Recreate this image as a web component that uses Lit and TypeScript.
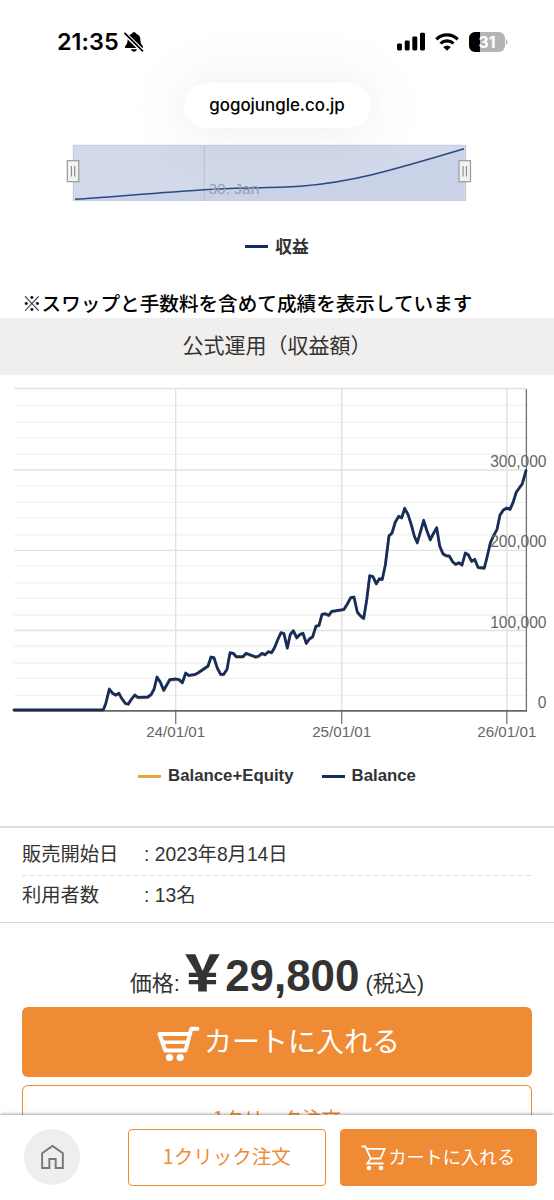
import { LitElement, html, svg, css } from "lit";
import { customElement } from "lit/decorators.js";

const SERIES: [number, number][] = [
  [14, 710], [103.3, 710], [106, 702.7], [109.3, 689], [112.7, 693.3], [115.7, 695], [119, 693.3], [121.7, 698.3],
  [125.3, 703.3], [128.3, 704], [131.3, 699.3], [134.7, 695], [138, 697.3], [147.7, 697], [151, 694.7], [154, 689.3],
  [157, 677], [160.3, 682], [163.7, 690.3], [169.7, 679.7], [176, 679], [179.3, 679.7], [182.3, 682.7], [185.7, 673],
  [188.7, 675.3], [195.3, 674.3], [198.3, 672.7], [208, 666], [211, 657], [214, 657.7], [217.3, 668], [220.7, 674.3],
  [223.7, 674.3], [227, 669.3], [230, 652.7], [233.3, 653.3], [236.3, 656.7], [243, 656.7], [246, 653.3], [255.7, 657],
  [258.7, 656], [262, 653.3], [265, 654.7], [268.3, 651.7], [271.7, 652.5], [274.7, 647.3], [278, 639], [281, 632.7],
  [284, 633.7], [287.3, 648], [290.3, 634.3], [293.3, 630.7], [296.7, 637.7], [300, 634.3], [303, 633.3], [306.3, 643.3],
  [309.3, 639], [312.7, 636.7], [316, 626], [319, 625.3], [322, 614.3], [325.3, 613.7], [328.7, 615.3], [331.7, 611.3],
  [338, 610.3], [344, 609.3], [347.3, 604], [350.7, 597.7], [354, 597], [357.3, 612], [360.3, 615.7], [363.7, 618.3],
  [366.7, 600], [369.7, 575.7], [373, 576.7], [376.3, 583.7], [379.3, 578.7], [382.3, 579.3], [385.3, 565], [389, 535.7],
  [392, 533], [395.3, 522], [398.7, 516.3], [401.7, 517.7], [404.7, 508.3], [408, 514.3], [411.3, 524.7], [414.3, 536],
  [417.3, 542.7], [423.7, 520.3], [427, 531], [430.3, 539.7], [433.3, 533.7], [436.7, 527.7], [439.7, 546], [443, 553.7],
  [446.3, 555.7], [449.3, 556], [452.7, 561.7], [455.7, 564.3], [459, 562.7], [462, 565], [465.3, 553], [468.3, 554.7],
  [471.7, 561.3], [474.7, 559.3], [478, 567.3], [484.3, 568], [487.3, 556], [490.3, 543], [493.7, 535.3], [497, 529.3],
  [500, 515], [503.3, 510], [506.7, 508], [510, 509.3], [513, 502.7], [516.3, 492], [522.3, 483.7], [526, 470.7],
];
const MINOR = [405.3, 422.3, 437.6, 454.4, 485.7, 502.4, 517.8, 534.8, 565.7, 582.8, 598.3, 615, 646, 663, 678.3, 695.3];
const MAJOR = [388.5, 470, 550.4, 630.5];
const YEARS: [number, string][] = [[175.7, "24/01/01"], [341.7, "25/01/01"], [506.8, "26/01/01"]];
const VALUES: [number, string][] = [[467, "300,000"], [547.3, "200,000"], [627.6, "100,000"], [707.8, "0"]];

@customElement("status-header")
class StatusHeader extends LitElement {
  static styles = css`
    :host { display: block; height: 128px; flex: none; }
    .status { height: 83px; box-sizing: border-box; padding: 0 46px 0 57px; display: flex; align-items: center; }
    .time { font: 600 23.4px/28px Inter, sans-serif; letter-spacing: 0.05px; color: #000; }
    .bell { margin-left: 4px; margin-top: 1px; }
    .right { margin-left: auto; display: flex; align-items: center; }
    .wifi { margin: 0 10px 0 10px; }
    .pill { width: 187px; height: 45px; margin: 0 auto; border-radius: 23px; background: #fff; color: #000;
      box-shadow: 0 4px 66px 10px rgba(0, 0, 0, .05), 0 0 24px rgba(0, 0, 0, .025);
      font: 500 16.9px/45px Inter, sans-serif; text-align: center; }
  `;
  render() {
    return html`
      <div class="status">
        <span class="time">21:35</span>
        <svg class="bell" width="22" height="22" viewBox="0 0 22 22">
          <path d="M11 1.2c-1.2 0-2 .7-2.2 1.6C5.900 3.700 4.600 6 4.600 9c0 3.600-1.500 4.800-2.500 6.200-.5.800-.2 1.700.9 1.700h16c1.100 0 1.400-.9.9-1.700-1-1.400-2.500-2.600-2.500-6.200 0-3-1.300-5.300-4.200-6.200C13 1.900 12.200 1.200 11 1.200z"/>
          <path d="M8 18.200h6c-.4 1.500-1.600 2.300-3 2.300s-2.600-.8-3-2.300z"/>
          <path d="M1.600 2.500L20 20.500" stroke="#fff" stroke-width="4.200"/>
          <path d="M1.400 1.900L20 20.300" stroke="#000" stroke-width="1.700"/>
        </svg>
        <div class="right">
          <svg width="28" height="19" viewBox="0 0 28 19">
            <rect x="0" y="11.500" width="5" height="7" rx="1.400"/><rect x="7.700" y="8.500" width="5" height="10" rx="1.400"/>
            <rect x="15.300" y="4.500" width="5" height="14" rx="1.400"/><rect x="23" y="0.700" width="5" height="17.800" rx="1.400"/>
          </svg>
          <svg class="wifi" width="24" height="18" viewBox="0 0 24 18" fill="none" stroke="#000" stroke-width="3.100">
            <path d="M1.300 6.300a15.200 15.200 0 0 1 21.400 0"/><path d="M5.500 10.500a9.300 9.300 0 0 1 13 0"/>
            <path d="M12 17.800l-3.800-3.900a5.500 5.500 0 0 1 7.600 0z" fill="#000" stroke="none"/>
          </svg>
          <svg width="39" height="20" viewBox="0 0 39 20">
            <rect width="36" height="20" rx="6.200" fill="#b4b4b4"/>
            <path d="M11 0H6.200A6.200 6.200 0 0 0 0 6.200v7.600A6.200 6.200 0 0 0 6.200 20H11z"/>
            <path d="M36.900 7c2.200.6 2.200 5.400 0 6z" fill="#b4b4b4"/>
            <text x="18" y="15.700" text-anchor="middle" font-family="Inter, sans-serif" font-weight="700" font-size="15.800" fill="#fff">31</text>
          </svg>
        </div>
      </div>
      <div class="pill">gogojungle.co.jp</div>`;
  }
}

@customElement("range-navigator")
class RangeNavigator extends LitElement {
  static styles = css`
    :host { display: block; margin-top: 12px; height: 70px; }
    svg { display: block; }
    text { font: 15.5px "Liberation Sans", sans-serif; fill: #999eb0; }
  `;
  handle(x: number) {
    return svg`<rect x=${x} y="160.700" width="11.500" height="21" fill="#f2f2f2" stroke="#999" stroke-width="1.200"/>
      <path d="M${x + 4.100} 166v10.500M${x + 7.400} 166v10.500" stroke="#888" stroke-width="1.100"/>`;
  }
  render() {
    const curve = "M75 199.300C110 197 160 192.500 204 189.700C235 187.700 265 188.300 300 186.200C350 182.500 390 171 464 148.800";
    return html`<svg width="554" height="70" viewBox="0 140 554 70">
      <rect x="73" y="145" width="393" height="56" fill="#d2d9ea"/>
      <path d="${curve}V200.500H75z" fill="#c9d2e6"/>
      <path d="M204.300 145v56" stroke="#b9c0d3"/>
      <path d="M73.300 145v56M465.700 145v56" stroke="#c6c8ce"/>
      <path d="M73 145.300H466M73 200.500H466" stroke="#c5cbdc" stroke-width=".8"/>
      <path d=${curve} fill="none" stroke="#2b4881" stroke-width="1.500"/>
      <text x="208.500" y="194">30. Jan</text>
      ${this.handle(67.300)}${this.handle(459)}
    </svg>`;
  }
}

@customElement("profit-chart")
class ProfitChart extends LitElement {
  static styles = css`
    :host { display: block; height: 375px; }
    svg { display: block; }
    text { font: 15.6px "Liberation Sans", sans-serif; fill: #666; }
    .date { font-size: 15.2px; }
  `;
  render() {
    const points = SERIES.map((p) => p.join(",")).join(" ");
    return html`<svg width="554" height="375" viewBox="0 375 554 375">
      ${MINOR.map((y) => svg`<path d="M14 ${y}H526" stroke="#f1f1f1" stroke-width="1.300"/>`)}
      ${MAJOR.map((y) => svg`<path d="M14 ${y}H526" stroke="#e1e1e1" stroke-width="1.300"/>`)}
      ${YEARS.map(([x]) => svg`<path d="M${x} 388V710" stroke="#e1e1e1" stroke-width="1.400"/><path d="M${x} 711v13" stroke="#777" stroke-width="1.300"/>`)}
      <path d="M526.400 389V710.800" stroke="#707070" stroke-width="1.300"/>
      <path d="M14 710.900H527" stroke="#666" stroke-width="1.800"/>
      <g fill="none" stroke-linejoin="round" stroke-linecap="round">
        <polyline points=${points} transform="translate(0 .8)" stroke="#eba83c" stroke-width="2.300"/>
        <polyline points=${points} stroke="#122e60" stroke-width="2.800"/>
      </g>
      ${VALUES.map(([y, t]) => svg`<text x="546.500" y=${y} text-anchor="end">${t}</text>`)}
      ${YEARS.map(([x, t]) => svg`<text class="date" x=${x} y="737.300" text-anchor="middle">${t}</text>`)}
    </svg>`;
  }
}

@customElement("app-root")
class AppRoot extends LitElement {
  static styles = css`
    :host { display: flex; flex-direction: column; height: 1200px; overflow: hidden; background: #fff; color: #333;
      font-family: "Liberation Sans", "Noto Sans CJK JP", sans-serif; }
    * { box-sizing: border-box; }
    .page { flex: 1; min-height: 0; overflow: hidden; margin-top: -128px; padding-top: 128px; }
    status-header { position: relative; }
    .legend { display: flex; justify-content: center; align-items: center; font-weight: 700; font-size: 16.8px; height: 26px; }
    .key { width: 23px; height: 3px; margin-right: 7px; background: #122e60; }
    .amber { background: #eba23a; }
    .first { margin-top: 23px; }
    .note { margin: 30px 0 0 22px; height: 28.500px; font: 500 19.630px/27px "Noto Sans CJK JP", sans-serif; color: #000; white-space: nowrap; }
    .band { height: 57.500px; background: #f0efed; text-align: center; font: 21px/53px "Noto Sans CJK JP", sans-serif; }
    .second { margin-top: 13px; gap: 28px; }
    .item { display: flex; align-items: center; }
    .facts { margin-top: 37px; height: 97px; border-top: 2px solid #ddd; border-bottom: 1.500px solid #d8d8d8; padding: 6px 22px 0; font-size: 19.300px; }
    .row { display: flex; height: 41px; line-height: 41px; }
    .row + .row { background: repeating-linear-gradient(90deg, #ddd 0 5px, transparent 5px 8px) top / 100% 1px no-repeat; }
    .label { width: 122px; }
    .price { height: 84px; display: flex; justify-content: center; align-items: baseline; font-size: 22px; line-height: 106px; overflow: hidden; white-space: pre; }
    .amount { font-size: 43.900px; font-weight: 700; }
    .yen { font-family: "Noto Sans CJK JP", sans-serif; font-size: 48.500px; font-weight: 900; line-height: 1; margin: 0 -1.700px; }
    .buy { margin: 0 22px; height: 70px; border-radius: 6px; background: #ef8b34; color: #fff; display: flex; align-items: flex-start; justify-content: center;
      padding-left: 3px; font: 28px/67px "Noto Sans CJK JP", sans-serif; gap: 4px; }
    .buy svg { margin-top: 19px; }
    .once { margin: 7.500px 22px 0; height: 60px; border: 1.500px solid #ef8b34; border-bottom: 0; border-radius: 6px 6px 0 0; color: #ef8b34; text-align: center;
      font: 19.500px/64px "Noto Sans CJK JP", sans-serif; }
    .bar { position: relative; flex: none; height: 85px; background: #fff; box-shadow: 0 -1px 3px rgba(0, 0, 0, .35); padding: 14px 17px 0 24px; display: flex; align-items: flex-start; }
    .home { width: 56px; height: 56px; border-radius: 50%; background: #eee; display: flex; align-items: center; justify-content: center; }
    .btn { width: 197.500px; height: 57px; border-radius: 4px; border: 1.500px solid #ef8b34; color: #ef8b34; display: flex; align-items: flex-start; justify-content: center;
      font: 19.500px/52px "Noto Sans CJK JP", sans-serif; }
    .btn svg { margin-top: 15px; }
    .outline { margin-left: 48px; }
    .solid { margin-left: 14px; background: #ef8b34; color: #fff; font-size: 18.100px; gap: 2px; }
  `;
  render() {
    return html`
      <status-header></status-header>
      <div class="page">
        <range-navigator></range-navigator>
        <div class="legend first"><span class="item"><i class="key"></i>収益</span></div>
        <div class="note">※スワップと手数料を含めて成績を表示しています</div>
        <div class="band">公式運用（収益額）</div>
        <profit-chart></profit-chart>
        <div class="legend second">
          <span class="item"><i class="key amber"></i>Balance+Equity</span>
          <span class="item"><i class="key"></i>Balance</span>
        </div>
        <div class="facts">
          <div class="row"><span class="label">販売開始日</span><span>: 2023年8月14日</span></div>
          <div class="row"><span class="label">利用者数</span><span>: 13名</span></div>
        </div>
        <div class="price"><span>価格:</span><span class="amount"><span class="yen">￥</span>29,800</span><span> (税込)</span></div>
        <div class="buy">
          <svg width="43" height="36" viewBox="0 0 43 36" fill="none" stroke="#fff" stroke-linecap="round" stroke-linejoin="round">
            <path d="M40.500 2.800H34.300L28.500 24.500H8.300L2.500 8H32.500" stroke-width="4"/>
            <path d="M6 16.200H30" stroke-width="3.600"/>
            <circle cx="12.500" cy="31.500" r="3.600" fill="#fff" stroke="none"/><circle cx="23.200" cy="31.500" r="3.600" fill="#fff" stroke="none"/>
          </svg>
          <span>カートに入れる</span>
        </div>
        <div class="once">1クリック注文</div>
      </div>
      <div class="bar">
        <div class="home">
          <svg width="23" height="26" viewBox="0 0 24 26" fill="none" stroke="#777" stroke-width="2">
            <path d="M1.200 24.500V9L12 1.500L22.800 9V24.500H15.300V15H8.700V24.500z"/>
          </svg>
        </div>
        <div class="btn outline">1クリック注文</div>
        <div class="btn solid">
          <svg width="25" height="26" viewBox="0 0 25 26" fill="none" stroke="#fff" stroke-width="1.800">
            <path d="M.5 1.500H4.300L9.800 13.500H19.500L23.700 3.800H5.500M9.800 13.500L6.300 18.500H22.500"/>
            <circle cx="8" cy="23" r="2.300" fill="#fff" stroke="none"/><circle cx="20" cy="23" r="2.300" fill="#fff" stroke="none"/>
          </svg>
          <span>カートに入れる</span>
        </div>
      </div>`;
  }
}
